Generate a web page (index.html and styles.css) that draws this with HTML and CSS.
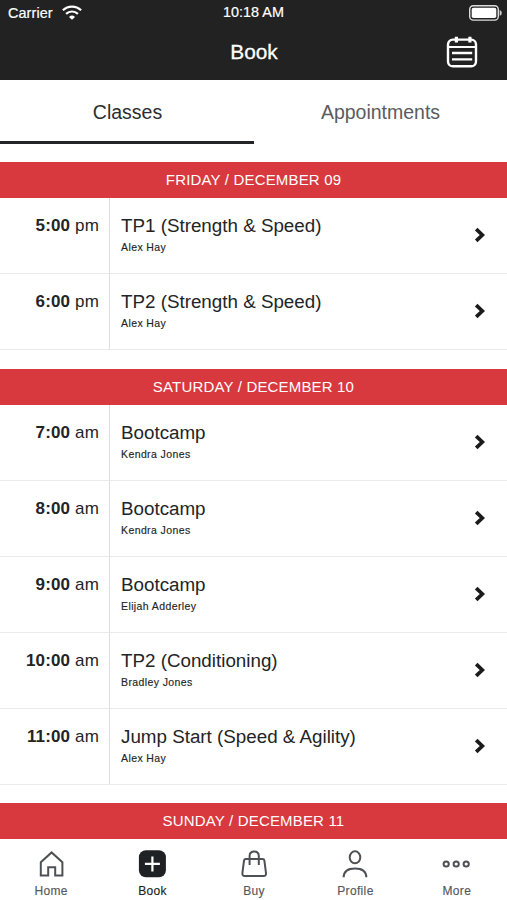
FILE: index.html
```
<!DOCTYPE html>
<html lang="en">
<head>
  <meta charset="UTF-8" />
  <meta name="viewport" content="width=device-width, initial-scale=1" />
  <title>Book</title>
  <link rel="stylesheet" href="styles.css">
</head>
<body>

  <div class="app">
    <header class="header">
      <div class="status">
        <div class="carrier">
          <span>Carrier</span>
          <svg class="wifi" width="20" height="15" viewBox="0 0 20 15" fill="none" stroke="#fff" stroke-width="2.2">
            <path d="M0.9 5.3 A13 13 0 0 1 19.1 5.3" />
            <path d="M4.1 8.9 A8.4 8.4 0 0 1 15.9 8.9" />
            <path d="M7 11.9 A4.4 4.4 0 0 1 13 11.9 L10 14.8 Z" fill="#fff" stroke="none" />
          </svg>
        </div>
        <span class="clock">10:18 AM</span>
        <svg class="battery" width="33" height="16" viewBox="0 0 33 16">
          <rect x="0.7" y="0.7" width="28.6" height="14.4" rx="3.6" fill="none" stroke="#ddd" stroke-width="1.4" />
          <rect x="2.7" y="2.7" width="24.6" height="10.4" rx="1.8" fill="#fff" />
          <path d="M30.6 5 Q32.8 5.6 32.8 7.9 Q32.8 10.2 30.6 10.8 Z" fill="#ccc" />
        </svg>
      </div>
      <div class="title-bar">
        <h1 class="title">Book</h1>
        <svg class="calendar" width="32" height="32" viewBox="0 0 32 32" fill="none" stroke="#fff" stroke-width="2.4">
          <rect x="2" y="3.6" width="28" height="26.6" rx="4.8" />
          <path d="M2 11 H30" stroke-width="2" />
          <path d="M10.4 0.8 V6.6 M23.9 0.8 V6.6" stroke-width="3.2" />
          <path d="M6 17 H26.2 M6 23.4 H26.2" />
        </svg>
      </div>
    </header>

    <div class="tabs">
      <a class="tab active" href="#">Classes</a>
      <a class="tab" href="#">Appointments</a>
    </div>

    <main class="schedule">
      <section class="day">
        <h2 class="date">FRIDAY / DECEMBER 09</h2>
        <a class="row" href="#">
          <div class="time"><b>5:00</b> pm</div>
          <div class="info"><div class="name">TP1 (Strength &amp; Speed)</div><div class="coach">Alex Hay</div></div>
          <svg class="arrow" viewBox="0 0 12 16"><path d="M2.2 2.2 L8.3 8 L2.2 13.8" /></svg>
        </a>
        <a class="row" href="#">
          <div class="time"><b>6:00</b> pm</div>
          <div class="info"><div class="name">TP2 (Strength &amp; Speed)</div><div class="coach">Alex Hay</div></div>
          <svg class="arrow" viewBox="0 0 12 16"><path d="M2.2 2.2 L8.3 8 L2.2 13.8" /></svg>
        </a>
      </section>

      <section class="day">
        <h2 class="date">SATURDAY / DECEMBER 10</h2>
        <a class="row" href="#">
          <div class="time"><b>7:00</b> am</div>
          <div class="info"><div class="name">Bootcamp</div><div class="coach">Kendra Jones</div></div>
          <svg class="arrow" viewBox="0 0 12 16"><path d="M2.2 2.2 L8.3 8 L2.2 13.8" /></svg>
        </a>
        <a class="row" href="#">
          <div class="time"><b>8:00</b> am</div>
          <div class="info"><div class="name">Bootcamp</div><div class="coach">Kendra Jones</div></div>
          <svg class="arrow" viewBox="0 0 12 16"><path d="M2.2 2.2 L8.3 8 L2.2 13.8" /></svg>
        </a>
        <a class="row" href="#">
          <div class="time"><b>9:00</b> am</div>
          <div class="info"><div class="name">Bootcamp</div><div class="coach">Elijah Adderley</div></div>
          <svg class="arrow" viewBox="0 0 12 16"><path d="M2.2 2.2 L8.3 8 L2.2 13.8" /></svg>
        </a>
        <a class="row" href="#">
          <div class="time"><b>10:00</b> am</div>
          <div class="info"><div class="name">TP2 (Conditioning)</div><div class="coach">Bradley Jones</div></div>
          <svg class="arrow" viewBox="0 0 12 16"><path d="M2.2 2.2 L8.3 8 L2.2 13.8" /></svg>
        </a>
        <a class="row" href="#">
          <div class="time"><b>11:00</b> am</div>
          <div class="info"><div class="name">Jump Start (Speed &amp; Agility)</div><div class="coach">Alex Hay</div></div>
          <svg class="arrow" viewBox="0 0 12 16"><path d="M2.2 2.2 L8.3 8 L2.2 13.8" /></svg>
        </a>
      </section>

      <section class="day">
        <h2 class="date">SUNDAY / DECEMBER 11</h2>
      </section>
    </main>

    <nav class="nav">
      <a class="nav-item" href="#">
        <svg class="icon" viewBox="0 0 28 28">
          <path d="M3.8 12.2 L14.6 2.4 L25.4 12.2 V25.4 H18.2 V17.2 H11.2 V25.4 H3.8 Z" />
        </svg>
        <span>Home</span>
      </a>
      <a class="nav-item active" href="#">
        <svg class="icon" viewBox="0 0 28 28">
          <rect x="0.9" y="0.3" width="27" height="27" rx="7" fill="#1f2224" stroke="none" />
          <path d="M14.4 6.4 V21.4 M6.9 13.9 H21.9" stroke="#fff" stroke-width="2.2" />
        </svg>
        <span>Book</span>
      </a>
      <a class="nav-item" href="#">
        <svg class="icon" viewBox="0 0 28 28">
          <path d="M5.8 9 H22.6 Q24.2 9 24.4 10.6 L26 23.2 Q26.2 26 23.6 26 H4.8 Q2.2 26 2.4 23.2 L4 10.6 Q4.2 9 5.8 9 Z" />
          <path d="M9.6 14.9 V6 Q9.6 1.5 14.2 1.5 Q18.8 1.5 18.8 6 V14.9" />
        </svg>
        <span>Buy</span>
      </a>
      <a class="nav-item" href="#">
        <svg class="icon" viewBox="0 0 28 28">
          <ellipse cx="14" cy="7.3" rx="5.3" ry="6" />
          <path d="M2.6 27.2 C2.8 21 7.2 18.4 14 18.4 C20.8 18.4 25.2 21 25.4 27.2" />
        </svg>
        <span>Profile</span>
      </a>
      <a class="nav-item" href="#">
        <svg class="icon" viewBox="0 0 28 28">
          <circle cx="4.2" cy="14" r="2.6" />
          <circle cx="14.2" cy="14" r="2.6" />
          <circle cx="24.2" cy="14" r="2.6" />
        </svg>
        <span>More</span>
      </a>
    </nav>
  </div>

</body>
</html>
```
FILE: styles.css
```
* {
  box-sizing: border-box;
}

html, body {
  margin: 0;
  padding: 0;
  height: 100%;
  overflow: hidden;
  font-family: "Liberation Sans", Arial, Helvetica, sans-serif;
  color: #222426;
  background: #fff;
}

a {
  color: inherit;
  text-decoration: none;
}

h1, h2 {
  margin: 0;
  font-weight: normal;
}

.app {
  display: flex;
  flex-direction: column;
  height: 100%;
}

/* header */
.header {
  flex: none;
  height: 80px;
  background: #222;
  color: #fff;
}

.status {
  display: grid;
  grid-template-columns: 1fr auto 1fr;
  align-items: center;
  height: 25px;
  padding: 0 5px 0 8px;
  font-size: 14.4px;
  -webkit-text-stroke: 0.2px #fff;
}

.carrier {
  display: flex;
  align-items: center;
  gap: 9px;
  letter-spacing: 0.1px;
}

.clock {
  padding: 0 3px 2px 0;
}

.battery {
  justify-self: end;
}

.title-bar {
  display: grid;
  grid-template-columns: 1fr auto 1fr;
  align-items: center;
  height: 54px;
  padding: 0 29px 0 30px;
}

.title {
  grid-column: 2;
  font-size: 20.8px;
  -webkit-text-stroke: 0.3px #fff;
}

.calendar {
  justify-self: end;
}

/* tabs */
.tabs {
  flex: none;
  display: flex;
  height: 64px;
}

.tab {
  flex: 1;
  padding-top: 1px;
  border-bottom: 3px solid transparent;
  text-align: center;
  font-size: 19.5px;
  line-height: 62px;
  color: #5a5c60;
}

.tab.active {
  padding-left: 1px;
  color: #2b2d30;
  border-bottom-color: #222426;
}

/* class list */
.schedule {
  flex: 1;
  min-height: 0;
  overflow: hidden;
  padding-top: 18.2px;
}

.day {
  margin-bottom: 18.2px;
}

.date {
  height: 36px;
  line-height: 35px;
  text-align: center;
  font-size: 15px;
  letter-spacing: 0.17px;
  color: #fff;
  background: #d8393e;
}

.row {
  display: flex;
  height: 76.1px;
  border-bottom: 1px solid #e8e9ea;
}

.time {
  width: 110px;
  padding: 18px 10px 0 0;
  border-right: 1px solid #dcddde;
  text-align: right;
  font-size: 17px;
  line-height: 20px;
  letter-spacing: 0.15px;
}

.info {
  flex: 1;
  padding: 17px 0 0 11px;
}

.name {
  font-size: 18.8px;
  line-height: 22px;
}

.coach {
  margin-top: 3px;
  font-size: 10.5px;
  line-height: 14px;
  letter-spacing: 0.4px;
  -webkit-text-stroke: 0.15px #222426;
}

.arrow {
  width: 12px;
  height: 16px;
  margin: 29px 21px 0 0;
  fill: none;
  stroke: #1b1b1b;
  stroke-width: 3.7;
}

/* bottom nav */
.nav {
  flex: none;
  display: flex;
  height: 60px;
  background: #fff;
}

.nav-item {
  flex: 1;
  display: flex;
  flex-direction: column;
  align-items: center;
  padding-top: 10px;
  font-size: 12px;
  line-height: 14px;
  letter-spacing: 0.35px;
  color: #55585c;
  -webkit-text-stroke: 0.15px currentColor;
}

.nav-item.active {
  color: #1f2224;
}

.nav-item span {
  padding-left: 1px;
}

.icon {
  width: 28px;
  height: 28px;
  margin-bottom: 6px;
  fill: none;
  stroke: #4d5054;
  stroke-width: 2;
}
```
